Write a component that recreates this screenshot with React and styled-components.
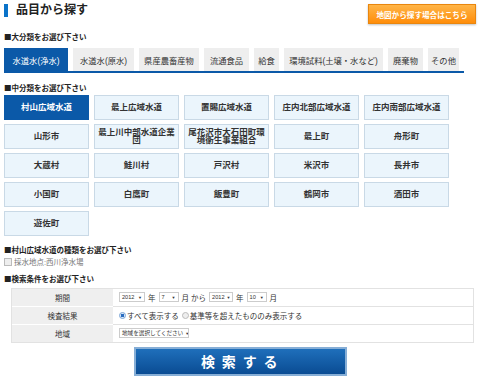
import React, { useState } from 'react'
import styled, { createGlobalStyle } from 'styled-components'

const GlobalStyle = createGlobalStyle`
  body {
    margin: 0;
    background: #fff;
    font-family: "Liberation Sans", "Noto Sans CJK JP", sans-serif;
    color: #333;
  }
`

const bigTabs = [
  { label: '水道水(浄水)', w: 64 },
  { label: '水道水(原水)', w: 61 },
  { label: '県産農畜産物', w: 60 },
  { label: '流通食品', w: 45 },
  { label: '給食', w: 25 },
  { label: '環境試料(土壌・水など)', w: 99 },
  { label: '廃棄物', w: 35 },
  { label: 'その他', w: 31 },
]

const areas = [
  '村山広域水道', '最上広域水道', '置賜広域水道', '庄内北部広域水道', '庄内南部広域水道',
  '山形市', '最上川中部水道企業団', '尾花沢市大石田町環境衛生事業組合', '最上町', '舟形町',
  '大蔵村', '鮭川村', '戸沢村', '米沢市', '長井市',
  '小国町', '白鷹町', '飯豊町', '鶴岡市', '酒田市',
  '遊佐町',
]

const Page = styled.div`
  width: 480px;
  height: 380px;
  box-sizing: border-box;
  padding: 4px 4px 0 4px;
  overflow: hidden;
`

const Header = styled.div`
  display: flex;
  justify-content: space-between;
  align-items: flex-start;
  height: 20px;
`

const Title = styled.h1`
  display: flex;
  align-items: center;
  gap: 8px;
  margin: 0;
  font-size: 12px;
  line-height: 13px;
  font-weight: bold;
  color: #222;
  &::before {
    content: '';
    display: block;
    width: 4px;
    height: 13px;
    background: #0a73c9;
  }
`

const MapButton = styled.div`
  width: 108px;
  height: 20px;
  box-sizing: border-box;
  display: flex;
  align-items: center;
  justify-content: center;
  background: linear-gradient(#ffb547, #ff8d0a);
  border: 1px solid #e9860e;
  box-shadow: 0 1px 2px rgba(0, 0, 0, 0.25);
  color: #fff;
  font-size: 7.6px;
  font-weight: bold;
`

const Label = styled.div`
  margin-top: ${p => p.$mt}px;
  font-family: "Noto Sans CJK JP", sans-serif;
  font-size: 7.5px;
  line-height: 10px;
  font-weight: bold;
  color: #222;
  white-space: nowrap;
`

const TabRow = styled.div`
  display: flex;
  gap: 5px;
  width: 460px;
  margin-top: 6px;
  border-bottom: 2px solid #0b59a8;
`

const Tab = styled.div`
  width: ${p => p.$w}px;
  flex-shrink: 0;
  height: 23px;
  display: flex;
  align-items: center;
  justify-content: center;
  font-size: 8.3px;
  white-space: nowrap;
  cursor: pointer;
  background: ${p => (p.$active ? '#0b59a8' : '#eeeeee')};
  color: ${p => (p.$active ? '#fff' : '#333')};
`

const AreaGrid = styled.div`
  display: grid;
  grid-template-columns: repeat(5, 85px);
  grid-auto-rows: 24.5px;
  column-gap: 5px;
  row-gap: 4.5px;
  margin-top: 2px;
`

const AreaButton = styled.div`
  box-sizing: border-box;
  display: flex;
  align-items: center;
  justify-content: center;
  text-align: center;
  padding: 0 3px;
  font-size: 8.5px;
  line-height: 8.5px;
  font-weight: bold;
  cursor: pointer;
  border: 1px solid ${p => (p.$active ? '#0b59a8' : '#c9d9e6')};
  background: ${p => (p.$active ? '#0b59a8' : '#ebf5fc')};
  color: ${p => (p.$active ? '#fff' : '#333')};
`

const CheckLine = styled.label`
  display: flex;
  align-items: center;
  gap: 2px;
  margin-top: 2px;
  height: 10px;
  font-size: 7.5px;
  color: #777;
`

const CheckBox = styled.span`
  width: 6px;
  height: 6px;
  border: 1px solid #bbb;
  background: #eee;
`

const Table = styled.div`
  width: 461px;
  margin: 4px 0 0 7px;
  border: 1px solid #e2e2e2;
  display: grid;
  grid-template-columns: 101px 1fr;
`

const Th = styled.div`
  height: 17px;
  display: flex;
  align-items: center;
  justify-content: center;
  background: #efefef;
  font-size: 7.5px;
  border-top: ${p => (p.$first ? 'none' : '1px solid #fff')};
`

const Td = styled.div`
  height: 17px;
  display: flex;
  align-items: center;
  gap: 3px;
  padding-left: 6px;
  font-size: 7.5px;
  white-space: nowrap;
  border-top: ${p => (p.$first ? 'none' : '1px solid #e2e2e2')};
`

const Select = styled.span`
  width: ${p => p.$w}px;
  height: 10px;
  box-sizing: border-box;
  display: inline-flex;
  align-items: center;
  justify-content: space-between;
  gap: 2px;
  padding: 0 2px;
  border: 1px solid #ccc;
  background: #fff;
  font-size: 5.6px;
  white-space: nowrap;
  overflow: hidden;
  color: #333;
  &::after {
    content: '▼';
    font-size: 4px;
  }
`

const Radio = styled.span`
  width: 5px;
  height: 5px;
  border-radius: 50%;
  border: 1px solid ${p => (p.$on ? '#7aa5d6' : '#bbb')};
  background: ${p => (p.$on ? 'radial-gradient(#2a6cc0 45%, #dbe8f6 55%)' : '#eee')};
  margin-right: -2px;
`

const SearchButton = styled.button`
  display: block;
  width: 213px;
  height: 29px;
  margin: 4px auto 0;
  padding: 0;
  border: 2px solid #86aed6;
  background: linear-gradient(#1f6fbb, #0a4c93);
  color: #fff;
  font-family: "Liberation Sans", "Noto Sans CJK JP", sans-serif;
  font-size: 14px;
  font-weight: bold;
  letter-spacing: 1.5px;
  cursor: pointer;
`

export default function App() {
  const [tab, setTab] = useState(0)
  const [area, setArea] = useState(0)

  return (
    <Page>
      <GlobalStyle />
      <Header>
        <Title>品目から探す</Title>
        <MapButton>地図から探す場合はこちら</MapButton>
      </Header>

      <Label $mt={8}>■大分類をお選び下さい</Label>
      <TabRow>
        {bigTabs.map((t, i) => (
          <Tab key={t.label} $w={t.w} $active={i === tab} onClick={() => setTab(i)}>
            {t.label}
          </Tab>
        ))}
      </TabRow>

      <Label $mt={10}>■中分類をお選び下さい</Label>
      <AreaGrid>
        {areas.map((a, i) => (
          <AreaButton key={a} $active={i === area} onClick={() => setArea(i)}>
            {a}
          </AreaButton>
        ))}
      </AreaGrid>

      <Label $mt={9}>■{areas[area]}の種類をお選び下さい</Label>
      <CheckLine>
        <CheckBox />
        採水地点:西川浄水場
      </CheckLine>

      <Label $mt={7}>■検索条件をお選び下さい</Label>
      <Table>
        <Th $first>期間</Th>
        <Td $first>
          <Select $w={26}>2012</Select>年
          <Select $w={20}>7</Select>月 から
          <Select $w={24}>2012</Select>年
          <Select $w={20}>10</Select>月
        </Td>
        <Th>検査結果</Th>
        <Td>
          <Radio $on />すべて表示する
          <Radio />基準等を超えたもののみ表示する
        </Td>
        <Th>地域</Th>
        <Td>
          <Select $w={70}>地域を選択してください</Select>
        </Td>
      </Table>

      <SearchButton>検 索 す る</SearchButton>
    </Page>
  )
}
